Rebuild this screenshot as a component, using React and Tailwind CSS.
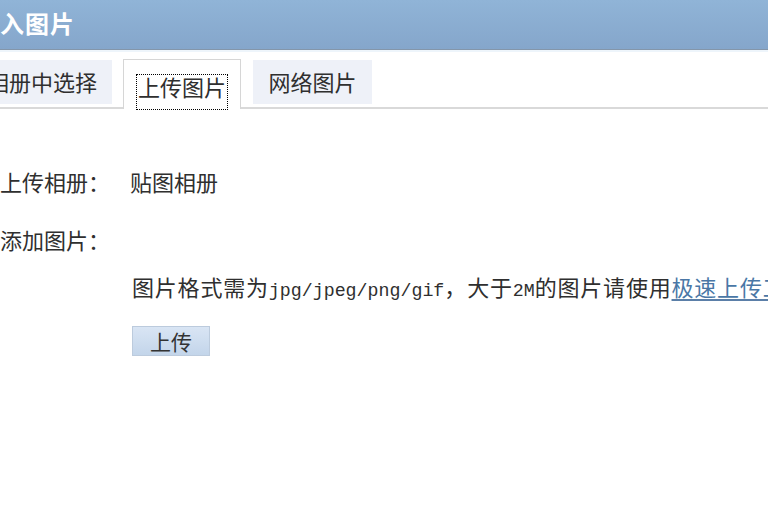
import React from 'react';

const cjk = { fontFamily: '"Noto Sans CJK SC", "Noto Sans", sans-serif' };

const Latin = ({ children }) => (
  <span className="text-[18.3px] tracking-normal font-['Liberation_Mono',monospace]">{children}</span>
);

const App = () => {
  return (
    <div className="w-[768px] h-[510px] overflow-hidden bg-white text-[#2f2f2f]" style={cjk}>
      {/* title bar */}
      <div className="h-[50px] flex items-center pb-[4px] bg-gradient-to-b from-[#90b4d7] to-[#85a6cb] border-b border-[#8496aa]">
        <span className="-ml-[25px] text-[24px] font-bold text-white tracking-[1px] leading-none">插入图片</span>
      </div>
      <div className="h-[2px] bg-[#eef5fb]" />

      {/* tabs */}
      <div className="mt-[8px] h-[49px] flex items-end border-b-2 border-[#d9d9d9]">
        <div className="-ml-[28px] w-[140px] h-[44px] mb-[3px] bg-[#eef1f8] flex items-center justify-center text-[22px] leading-none pb-[2px]">
          相册中选择
        </div>
        <div className="ml-[11px] w-[118px] h-[50px] -mb-[2px] bg-white border border-b-0 border-[#d6d6d6] flex justify-center pt-[14px]">
          <span className="h-[36px] border border-dotted border-black px-[1px] text-[22px] leading-[22px]">上传图片</span>
        </div>
        <div className="ml-[12px] w-[119px] h-[44px] mb-[3px] bg-[#eef1f8] flex items-center justify-center text-[22px] leading-none pb-[2px]">
          网络图片
        </div>
      </div>

      {/* form */}
      <div className="pt-[57px]">
        <div className="flex h-[30px] items-center text-[22px]">
          <div className="w-[130px]">上传相册：</div>
          <div>贴图相册</div>
        </div>
        <div className="mt-[28px] flex h-[30px] items-center text-[22px]">
          <div className="w-[130px]">添加图片：</div>
        </div>
        <div className="mt-[17px] pl-[132px] h-[30px] leading-[30px] whitespace-nowrap text-[22px] tracking-[0.8px]">
          图片格式需为<Latin>jpg/jpeg/png/gif</Latin>，大于<Latin>2M</Latin>的图片请使用<a className="text-[#4a77a6] underline underline-offset-[3px] decoration-[#5b7fa8]">极速上传工具</a>
        </div>
        <div className="mt-[25px] pl-[132px]">
          <button className="w-[78px] h-[30px] bg-gradient-to-b from-[#d9e5f4] to-[#c3d5ea] border border-[#bccbdd] text-[21px] text-[#333] leading-none">
            上传
          </button>
        </div>
      </div>
    </div>
  );
};

export default App;
